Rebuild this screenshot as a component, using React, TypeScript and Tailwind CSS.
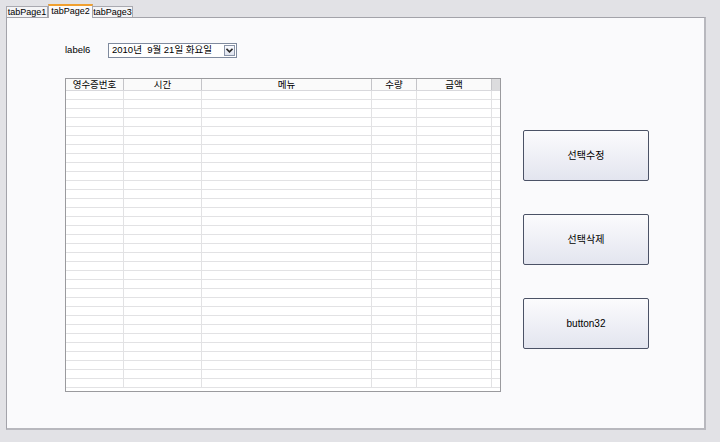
import React from 'react';

const columns = [
  { name: '영수증번호', w: 'w-[58px]' },
  { name: '시간', w: 'w-[78px]' },
  { name: '메뉴', w: 'w-[170px]' },
  { name: '수량', w: 'w-[45px]' },
  { name: '금액', w: 'w-[75px]' },
];

const rows = Array.from({ length: 33 });

const ActionButton = ({ label }: { label: string }) => (
  <button className="w-[126px] h-[51px] rounded-[2px] border border-[#4b5266] bg-gradient-to-b from-[#fbfbfd] to-[#e3e5ef] text-[10px] text-black flex items-center justify-center">
    {label}
  </button>
);

export default function App() {
  const font = { fontFamily: '"Liberation Sans", "Noto Sans CJK KR", sans-serif' };
  return (
    <div className="w-[720px] h-[442px] bg-[#e2e2e6] pl-[6px] pt-[3px] text-[10px] text-black" style={font}>
      {/* tab strip */}
      <div className="flex items-end h-[14px]">
        <div className="w-[42px] h-[11px] border border-b-0 border-[#a9a9b0] bg-[#f4f4f6] text-[9px] leading-[10px] text-center">tabPage1</div>
        <div className="w-[45px] h-[14px] border border-b-0 border-[#a9a9b0] border-t-2 border-t-[#f0a030] bg-[#fafafc] text-[9px] leading-[11px] text-center relative top-[1px]">tabPage2</div>
        <div className="w-[40px] h-[11px] border border-b-0 border-l-0 border-[#a9a9b0] bg-[#f4f4f6] text-[9px] leading-[10px] text-center">tabPage3</div>
      </div>
      {/* tab page */}
      <div className="w-[700px] h-[413px] border border-[#a3a3aa] border-r-2 border-b-2 border-r-[#b8b8be] border-b-[#b8b8be] bg-[#fafafc] pl-[58px] pt-[25px] flex">
        <div className="flex flex-col">
          <div className="flex items-center h-[15px]">
            <span className="w-[43px] text-[9.5px]">label6</span>
            <div className="w-[129px] h-[15px] border border-[#7f8a9e] bg-white flex items-center justify-between pl-[3px] pr-[1px]">
              <span className="text-[9.5px]">2010년&nbsp;&nbsp;9월 21일 화요일</span>
              <span className="w-[11px] h-[11px] border border-[#8a94a8] bg-gradient-to-b from-[#fafbff] to-[#dfe3ee] flex items-center justify-center">
                <svg width="7" height="5" viewBox="0 0 7 5"><path d="M0.5 0.8 L3.5 3.8 L6.5 0.8" fill="none" stroke="#2a2a2a" strokeWidth="1.6" /></svg>
              </span>
            </div>
          </div>
          {/* grid */}
          <div className="mt-[20px] w-[436px] h-[314px] border border-[#9a9a9e] bg-white overflow-hidden">
            <div className="flex h-[12px] border-b border-[#d8d8dc] bg-[#fafafa]">
              {columns.map((c) => (
                <div key={c.name} className={`${c.w} shrink-0 border-r border-[#c4c4c8] text-center text-[9.5px] leading-[12px]`}>
                  {c.name}
                </div>
              ))}
              <div className="flex-1 bg-[#dcdcde]" />
            </div>
            {rows.map((_, i) => (
              <div key={i} className="flex h-[9px] border-b border-[#e2e2e4]">
                {columns.map((c) => (
                  <div key={c.name} className={`${c.w} shrink-0 border-r border-[#e2e2e4]`} />
                ))}
                <div className="flex-1" />
              </div>
            ))}
          </div>
        </div>
        <div className="ml-[22px] mt-[87px] flex flex-col gap-[33px]">
          <ActionButton label="선택수정" />
          <ActionButton label="선택삭제" />
          <ActionButton label="button32" />
        </div>
      </div>
    </div>
  );
}
